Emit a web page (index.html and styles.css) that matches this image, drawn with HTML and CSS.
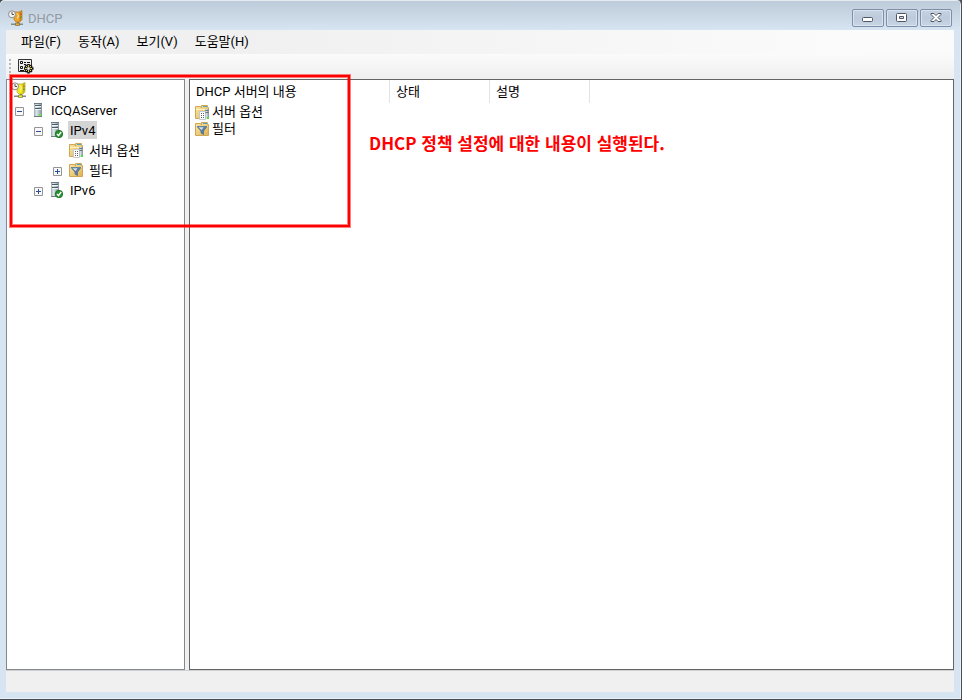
FILE: index.html
```html
<!DOCTYPE html>
<html lang="ko">
<head>
<meta charset="utf-8">
<title>DHCP</title>
<link rel="stylesheet" href="styles.css">
</head>
<body>
<svg class="defs" aria-hidden="true">
  <defs>
    <linearGradient id="gold" x1="0" y1="0" x2="1" y2="1"><stop offset="0" stop-color="#fbe9a6"/><stop offset="1" stop-color="#dfb254"/></linearGradient>
    <linearGradient id="steel"><stop offset="0" stop-color="#9aa8b1"/><stop offset=".3" stop-color="#dde6ea"/><stop offset="1" stop-color="#80909a"/></linearGradient>
    <symbol id="dhcp" viewBox="0 0 16 16">
      <path d="M6 2h5l3-1.500v9L12 12H8l-2-2z" fill="var(--body)" stroke="var(--edge)" stroke-width=".6"/>
      <path d="M11.500 2v9.500l2-1.500V1z" fill="var(--edge)" opacity=".6"/>
      <path d="M12.500 3.500h1V5h-1z" fill="#d43a20"/><path d="M12.500 6.500h1V8h-1z" fill="#3b9b42"/>
      <path d="M9 3.500l1.500 2-1 3" fill="none" stroke="#fff7b8"/>
      <path d="M9 12h2v2H9z" fill="var(--edge)"/>
      <path d="M3 13.500h12v1.500H3z" fill="#7e8d80"/><path d="M7.500 13h4v2.500h-4z" fill="var(--body)" stroke="#5f6650" stroke-width=".6"/>
      <circle cx="4" cy="4.300" r="3.500" fill="#f4f4f2" stroke="#8b8d8e"/>
      <path d="M4 2v2.500h2" fill="none" stroke="#555"/>
    </symbol>
    <symbol id="server" viewBox="0 0 16 16">
      <path d="M4 1h8v14H4z" fill="url(#steel)"/>
      <path d="M4 1.500h8M4 14.500h8" stroke="#6b7a83"/>
      <path d="M5 3.500h6M5 6.500h6" stroke="#4b5b64"/>
      <path d="M5 4.500h6M5 7.500h6" stroke="#eef3f5"/>
      <path d="M9 12h2v2H9z" fill="#64ef35"/>
    </symbol>
    <symbol id="serverok" viewBox="0 0 16 16">
      <path d="M2 0h8v15H2z" fill="url(#steel)"/>
      <path d="M2 .5h8M2 14.500h5" stroke="#6b7a83"/>
      <path d="M3 2.500h6M3 5.500h6" stroke="#4b5b64"/>
      <path d="M3 3.500h6M3 6.500h6" stroke="#eef3f5"/>
      <circle cx="10" cy="12" r="3.700" fill="#27932e" stroke="#176b20" stroke-width=".8"/>
      <path d="M8 12l1.500 1.700 2.700-3.700" fill="none" stroke="#fff" stroke-width="1.400"/>
    </symbol>
    <symbol id="folder" viewBox="0 0 16 16">
      <path d="M1.500 14.500v-12h5l1 1.500V1.500h6v2h1v11z" fill="url(#gold)" stroke="#cfa654"/>
      <path d="M9 2.500h4" stroke="#4aa5d8"/><path d="M2 5.500h12" stroke="#fff2bd"/>
    </symbol>
    <symbol id="options" viewBox="0 0 16 16">
      <use href="#folder" width="16" height="16"/>
      <path d="M5.500 7.500h6v8h-6z" fill="#fff" stroke="#c4c9cf"/>
      <path d="M7 9.500h1m1 0h1M7 11.500h1m1 0h1M7 13.500h1m1 0h1" stroke="#55606b"/>
      <path d="M11 5h4v10h-4z" fill="url(#steel)"/><path d="M11.500 6.500h3m-3 2h3" stroke="#65747e"/>
      <path d="M13 13h2v2h-2z" fill="#54df34"/>
    </symbol>
    <symbol id="filter" viewBox="0 0 16 16">
      <use href="#folder" width="16" height="16"/>
      <path d="M3 5.500h10L9.500 10v3.500L7 12v-2z" fill="#5e7f9f" stroke="#4b6a89" stroke-width=".7"/>
      <path d="M4.500 6.300h5L7.600 9z" fill="#d5e5ef"/>
    </symbol>
    <symbol id="plus" viewBox="0 0 9 9">
      <path d="M.5.5h8v8h-8z" fill="#f8f8f8" stroke="#959595"/><path d="M2 4.500h5M4.500 2v5" stroke="#2c4da0"/>
    </symbol>
    <symbol id="minus" viewBox="0 0 9 9">
      <path d="M.5.5h8v8h-8z" fill="#f8f8f8" stroke="#959595"/><path d="M2 4.500h5" stroke="#2c4da0"/>
    </symbol>
  </defs>
</svg>
<div class="window">
  <header class="titlebar">
    <svg class="icon amber"><use href="#dhcp"/></svg>
    <h1>DHCP</h1>
    <div class="controls">
      <button type="button" aria-label="최소화"><svg viewBox="0 0 16 12"><rect x="2.500" y="5.500" width="10" height="4" rx="1" fill="#fff" stroke="#4d5566"/></svg></button>
      <button type="button" aria-label="최대화"><svg viewBox="0 0 16 12"><rect x="2.500" y="1.500" width="10" height="8" rx="1" fill="#fff" stroke="#4d5566"/><path d="M5.500 4.500h4v2h-4z" fill="#d5dfea" stroke="#4d5566"/></svg></button>
      <button type="button" aria-label="닫기"><svg viewBox="0 0 16 12"><path d="M3 1.500h3l2 2 2-2h3v1L10 5.500l3 3v1h-3l-2-2-2 2H3v-1l3-3-3-3z" fill="#fff" stroke="#4d5566"/></svg></button>
    </div>
  </header>
  <div class="client">
    <nav class="menubar">
      <button type="button">파일(F)</button>
      <button type="button">동작(A)</button>
      <button type="button">보기(V)</button>
      <button type="button">도움말(H)</button>
    </nav>
    <div class="toolbar">
      <span class="grip"></span>
      <button type="button" aria-label="속성">
        <svg class="icon" viewBox="0 0 16 16">
          <path d="M.5 1.500h13v12H.5z" fill="#eee" stroke="#333"/>
          <path d="M2.500 3.500h2v2h-2zM2.500 8.500h2v2h-2z" fill="#fff" stroke="#111"/>
          <path d="M6 4.500h2m1 0h3M6 6.500h2M2 12.500h4" stroke="#111"/>
          <path d="M10.500 6v9.500M6 10.500h9.500M7.300 7.300l6.500 6.500M13.800 7.300l-6.500 6.500" stroke="#111" stroke-width="2.600"/>
          <path d="M10.500 7v7M7 10.500h7M8 8l5 5M13 8l-5 5" stroke="#e8df45"/>
          <circle cx="10.500" cy="10.500" r="1.500" fill="#fff" stroke="#777"/>
        </svg>
      </button>
    </div>
    <main class="panes">
      <nav class="tree" aria-label="콘솔 트리">
        <ul>
          <li>
            <div class="node"><svg class="icon lemon"><use href="#dhcp"/></svg><a href="#">DHCP</a></div>
            <ul>
              <li>
                <div class="node"><button type="button" aria-label="접기"><svg><use href="#minus"/></svg></button><svg class="icon"><use href="#server"/></svg><a href="#">ICQAServer</a></div>
                <ul class="nested">
                  <li>
                    <div class="node"><button type="button" aria-label="접기"><svg><use href="#minus"/></svg></button><svg class="icon"><use href="#serverok"/></svg><a href="#" class="selected">IPv4</a></div>
                    <ul class="nested">
                      <li><div class="node leaf"><svg class="icon"><use href="#options"/></svg><a href="#">서버 옵션</a></div></li>
                      <li><div class="node"><button type="button" aria-label="펼치기"><svg><use href="#plus"/></svg></button><svg class="icon"><use href="#filter"/></svg><a href="#">필터</a></div></li>
                    </ul>
                  </li>
                  <li><div class="node"><button type="button" aria-label="펼치기"><svg><use href="#plus"/></svg></button><svg class="icon"><use href="#serverok"/></svg><a href="#">IPv6</a></div></li>
                </ul>
              </li>
            </ul>
          </li>
        </ul>
      </nav>
      <section class="content">
        <table>
          <thead><tr><th class="name">DHCP 서버의 내용</th><th>상태</th><th>설명</th></tr></thead>
          <tbody>
            <tr><td><div class="item"><svg class="icon"><use href="#options"/></svg>서버 옵션</div></td><td></td><td></td></tr>
            <tr><td><div class="item"><svg class="icon"><use href="#filter"/></svg>필터</div></td><td></td><td></td></tr>
          </tbody>
        </table>
        <p class="note">DHCP 정책 설정에 대한 내용이 실행된다.</p>
      </section>
      <div class="highlight"></div>
    </main>
    <footer class="status"></footer>
  </div>
</div>
</body>
</html>
```
FILE: styles.css
```css
* { box-sizing: border-box; }

body {
  margin: 0;
  font: 13px/16px Roboto, "Noto Sans CJK KR", sans-serif;
  color: #000;
  background: #4b4c50;
}

button {
  margin: 0;
  padding: 0;
  border: 0;
  background: none;
  color: inherit;
  font: inherit;
}

ul { list-style: none; margin: 0; padding: 0; }
a { color: inherit; text-decoration: none; }
svg { display: block; flex: none; }
.defs { position: absolute; width: 0; height: 0; }
.icon { width: 16px; height: 16px; }
.amber { --body: #f0a52b; --edge: #a9701c; }
.lemon { --body: #f4ea22; --edge: #9b941a; }

.window {
  display: flex;
  flex-direction: column;
  min-height: 100vh;
  padding: 0 7px 7px 6px;
  border: solid #4b4c50;
  border-width: 0 1px 1px 0;
  border-radius: 5px 5px 0 0;
  background: linear-gradient(#bccad9, #d7e4f1 30px) #d7e4f1;
  box-shadow: inset 0 1px #e5ebf1, inset -1px -1px #e8f0f8;
}

.titlebar {
  display: flex;
  align-items: center;
  height: 30px;
  padding: 6px 2px 0;
}

.titlebar h1 {
  flex: 1;
  margin: 0 0 0 4px;
  padding-top: 2px;
  font-size: 13px;
  font-weight: 400;
  color: #929aa3;
}

.controls { display: flex; gap: 2px; }

.controls button {
  display: grid;
  place-items: center;
  width: 32px;
  height: 18px;
  border: 1px solid #7f8fa9;
  border-radius: 2px;
  background: linear-gradient(#c6d3e1, #bccadb 50%, #c8d6e5);
  box-shadow: inset 0 0 0 1px #d8e3ee;
}

.controls svg { width: 16px; height: 12px; }

.client { flex: 1; display: flex; flex-direction: column; background: #f0f0f0; }

.menubar {
  display: flex;
  gap: 17px;
  height: 24px;
  padding: 0 15px;
  background: linear-gradient(90deg, #f0f0f0 25%, #fbfbfb 90%);
}

.toolbar {
  display: flex;
  align-items: center;
  gap: 7px;
  height: 25px;
  padding: 0 3px 2px;
  background: linear-gradient(#fbfbfb, #efefef);
}

.grip {
  width: 2px;
  height: 14px;
  background: repeating-linear-gradient(#b8b8b8 0 2px, transparent 2px 4px);
}

.panes { position: relative; flex: 1; display: flex; gap: 4px; }

.tree { width: 179px; border: 1px solid #828790; background: #fff; }

.node { display: flex; align-items: center; height: 20px; padding-left: 4px; }
.node button { width: 19px; padding: 2px 0 0 4px; }
.node button svg { width: 9px; height: 9px; }
.node a { margin-left: 3px; padding: 2px 2px 0; }
.node .selected { background: #d4d4d4; }
.nested { padding-left: 19px; }
.leaf { padding-left: 23px; }

.content { flex: 1; border: 1px solid #646464; background: #fff; }

table { width: 400px; border-spacing: 0; table-layout: fixed; }
th { width: 100px; height: 23px; padding: 0 6px; border-right: 1px solid #e3e3e3; text-align: left; font-weight: 400; }
.name { width: 200px; }
td { height: 17px; padding: 0 4px; }
.item { display: flex; align-items: center; gap: 2px; height: 17px; }

.note {
  margin: -6px 0 0 179px;
  font: 700 17px/24px "Noto Sans CJK KR", sans-serif;
  color: #f00;
}

.highlight {
  position: absolute;
  top: -4px;
  left: 4px;
  width: 340px;
  height: 152px;
  border: 2px solid #f00;
  box-shadow: 0 0 0 1px #ff000080, inset 0 0 0 1px #ff000080;
  pointer-events: none;
}

.status { height: 22px; border-top: 1px solid #d0d0d0; }
```
